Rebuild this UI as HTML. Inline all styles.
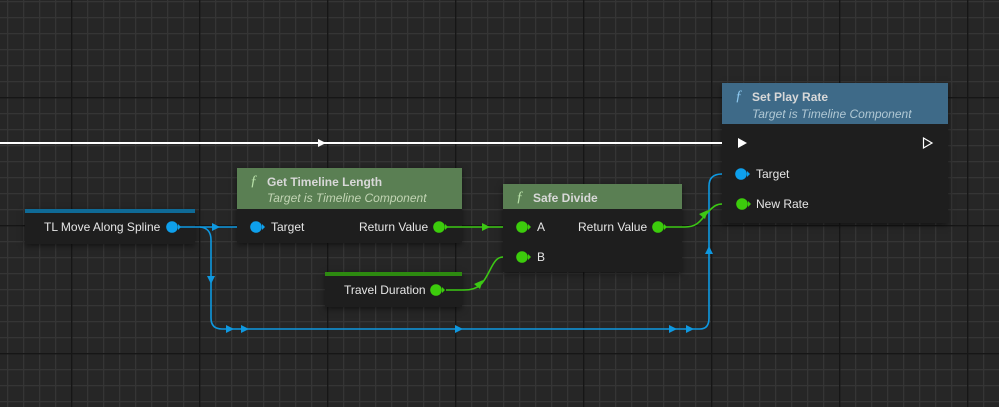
<!DOCTYPE html>
<html><head><meta charset="utf-8"><style>
body{margin:0;width:999px;height:407px;overflow:hidden;background:#262626;font-family:"Liberation Sans",sans-serif;}
svg{position:absolute;left:0;top:0}
.n{position:absolute;background:#1e1e1e;box-shadow:0 2px 6px rgba(0,0,0,.5);}
.t{position:absolute;color:#e6e6e6;font-size:12px;white-space:nowrap;line-height:14px}
.h{position:absolute;}
.ti{position:absolute;color:#d8d8d8;font-weight:bold;font-size:12px;white-space:nowrap}
.su{position:absolute;font-style:italic;font-size:12px;white-space:nowrap}
.f{position:absolute;font-style:italic;font-family:"Liberation Serif",serif;font-size:15px}
</style></head><body>
<svg width="999" height="407">
<defs>
<pattern id="mi" x="7" y="1" width="16" height="16" patternUnits="userSpaceOnUse"><rect width="16" height="16" fill="#262626"/><rect width="1.3" height="16" fill="#353535"/><rect width="16" height="1.3" fill="#353535"/></pattern>
<pattern id="ma" x="71" y="97" width="128" height="128" patternUnits="userSpaceOnUse"><rect width="1.4" height="128" fill="#161616"/><rect width="128" height="1.4" fill="#161616"/></pattern>
</defs>
<rect width="999" height="407" fill="url(#mi)"/>
<rect width="999" height="407" fill="url(#ma)"/>
</svg>
<div class="n" style="left:25px;top:209px;width:170px;height:35px"><div class="h" style="left:0;top:0;width:170px;height:4px;background:#0f6a96"></div></div>
<div class="n" style="left:237px;top:168px;width:225px;height:75px"><div class="h" style="left:0;top:0;width:225px;height:41px;background:#5a7f53"></div></div>
<div class="n" style="left:325px;top:272px;width:137px;height:35px"><div class="h" style="left:0;top:0;width:137px;height:4px;background:#2d8a10"></div></div>
<div class="n" style="left:503px;top:184px;width:179px;height:88px"><div class="h" style="left:0;top:0;width:179px;height:25px;background:#5a7f53"></div></div>
<div class="n" style="left:722px;top:83px;width:226px;height:140px"><div class="h" style="left:0;top:0;width:226px;height:41px;background:#3e6a88"></div></div>
<svg width="999" height="407" fill="none">
<g stroke="#fff" stroke-width="2"><line x1="0" y1="143" x2="722" y2="143"/></g>
<path d="M318 139 L326 143 L318 147Z" fill="#fff"/>
<g stroke="#0e98e0" stroke-width="1.6">
<path d="M178 227 H237"/>
<path d="M200 227 Q211 228 211 240 V318 Q211 329 222 329 H700 Q709 329 709 318 V186 Q709 174 722 174"/>
</g>
<g fill="#0e98e0">
<path d="M212 223 L220 227 L212 231Z"/><path d="M207 276 L211 284 L215 276Z"/>
<path d="M226 325 L234 329 L226 333Z"/><path d="M241 325 L249 329 L241 333Z"/><path d="M455 325 L463 329 L455 333Z"/>
<path d="M669 325 L677 329 L669 333Z"/><path d="M686 325 L694 329 L686 333Z"/><path d="M705 254 L709 246 L713 254Z"/>
</g>
<g stroke="#3cc814" stroke-width="1.6">
<path d="M446 227 H503"/>
<path d="M446 290 H464 C480 290 483 283 490 270 C494 262 497 257 503 257"/>
<path d="M665 227 H685 C700 227 702 217 710 210 C714 206 717 204 722 204"/>
</g>
<g fill="#3cc814"><path d="M482 223 L490 227 L482 231Z"/><path d="M474 284 L483 280 L480 289Z"/><path d="M699 214 L708 210 L705 219Z"/></g>
<g fill="#0ea0ec"><circle cx="172" cy="227" r="5.8"/><circle cx="256" cy="227" r="5.8"/><circle cx="741" cy="174" r="5.8"/></g>
<g fill="#3ccc0c"><circle cx="439" cy="227" r="5.8"/><circle cx="436" cy="290" r="5.8"/><circle cx="522" cy="227" r="5.8"/><circle cx="522" cy="257" r="5.8"/><circle cx="658" cy="227" r="5.8"/><circle cx="742" cy="204" r="5.8"/></g>
<g fill="#0ea0ec"><path d="M178 224 L181 227 L178 230Z"/><path d="M262 224 L265 227 L262 230Z"/><path d="M747 171 L750 174 L747 177Z"/></g>
<g fill="#3ccc0c"><path d="M445 224 L448 227 L445 230Z"/><path d="M442 287 L445 290 L442 293Z"/><path d="M528 224 L531 227 L528 230Z"/><path d="M528 254 L531 257 L528 260Z"/><path d="M664 224 L667 227 L664 230Z"/><path d="M748 201 L751 204 L748 207Z"/></g>
<path d="M738 138 L747 143 L738 148Z" fill="#fff"/>
<path d="M923.5 138 L932 143 L923.5 148Z" stroke="#fff" stroke-width="1.2"/>
</svg>
<div class="t" style="left:44px;top:220px">TL Move Along Spline</div>
<div class="f" style="left:250px;top:173px;color:#b8e0a8">ƒ</div>
<div class="ti" style="left:267px;top:175px">Get Timeline Length</div>
<div class="su" style="left:267px;top:191px;color:#c2d4b4">Target is Timeline Component</div>
<div class="t" style="left:271px;top:220px">Target</div>
<div class="t" style="left:359px;top:220px">Return Value</div>
<div class="t" style="left:344px;top:283px">Travel Duration</div>
<div class="f" style="left:516px;top:189px;color:#b8e0a8">ƒ</div>
<div class="ti" style="left:533px;top:191px">Safe Divide</div>
<div class="t" style="left:537px;top:220px">A</div>
<div class="t" style="left:537px;top:250px">B</div>
<div class="t" style="left:578px;top:220px">Return Value</div>
<div class="f" style="left:735px;top:88px;color:#8cc8f0">ƒ</div>
<div class="ti" style="left:752px;top:90px">Set Play Rate</div>
<div class="su" style="left:752px;top:107px;color:#b0c8d4">Target is Timeline Component</div>
<div class="t" style="left:756px;top:167px">Target</div>
<div class="t" style="left:756px;top:197px">New Rate</div>
</body></html>
